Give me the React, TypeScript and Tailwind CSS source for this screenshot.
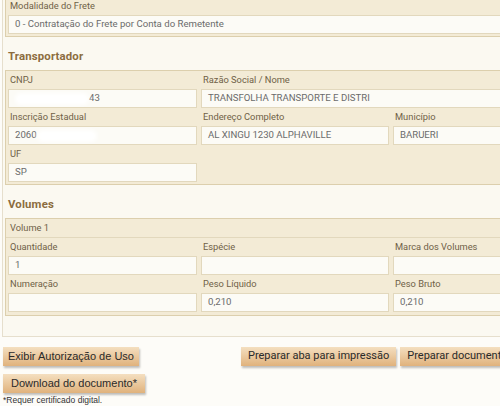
import type { ReactNode } from "react";

const font = { fontFamily: "Roboto, 'Liberation Sans', sans-serif" };
const arial = { fontFamily: "'Liberation Sans', Arial, sans-serif" };

function Label({ children }: { children: ReactNode }) {
  return (
    <div className="flex h-[18px] items-center pl-[2px] text-[9.3px] text-[#6f6147]">
      {children}
    </div>
  );
}

function Field({ children }: { children?: ReactNode }) {
  return (
    <div className="flex h-[19px] items-center overflow-hidden whitespace-nowrap border border-[#e2d8bd] bg-[#fcfbf6] pl-[6px] text-[9.6px] text-[#6b6b6b]">
      {children}
    </div>
  );
}

function Heading({ children }: { children: ReactNode }) {
  return (
    <div className="flex h-[33px] items-center pl-[3px] pt-[7px] text-[11.4px] font-bold tracking-[0.15px] text-[#8c6d3f]">
      {children}
    </div>
  );
}

// mancha que imita os dígitos borrados do print
function Blur({ w }: { w: number }) {
  return <span className="inline-block h-[12px] rounded-full bg-white blur-[2px]" style={{ width: w }} />;
}

function Botao({
  children,
  useArial = false,
  className = "px-[7px]",
}: {
  children: ReactNode;
  useArial?: boolean;
  className?: string;
}) {
  return (
    <button
      className={`h-[19px] whitespace-nowrap bg-gradient-to-b from-[#f4dfc0] to-[#e0b27c] text-[11px] text-[#2a2a2a] shadow-[1px_2px_2px_rgba(0,0,0,0.25)] ${className}`}
      style={useArial ? arial : font}
    >
      {children}
    </button>
  );
}

export default function App() {
  return (
    <div className="h-[406px] w-[500px] overflow-hidden bg-[#fdfcf8]" style={font}>
      <div className="w-[600px]">
        {/* bloco do formulário */}
        <div className="ml-[2px] border-b border-l border-[#e6dfcd] bg-[#fbf9f1] pb-[20px] pl-[2px]">
          {/* Modalidade do frete */}
          <div className="-mt-[4px] border border-[#dccfad] bg-[#f3ebd6] px-[2px] pb-[2px]">
            <Label>Modalidade do Frete</Label>
            <Field>0 - Contratação do Frete por Conta do Remetente</Field>
          </div>

          <Heading>Transportador</Heading>
          <div className="border border-[#dccfad] bg-[#f3ebd6] px-[2px] pb-[2px]">
            <div className="grid grid-cols-[189px_188px_188px] gap-x-[4px]">
              <div>
                <Label>CNPJ</Label>
                <Field>
                  <Blur w={74} />
                  <span>43</span>
                </Field>
              </div>
              <div className="col-span-2">
                <Label>Razão Social / Nome</Label>
                <Field>TRANSFOLHA TRANSPORTE E DISTRI</Field>
              </div>
              <div>
                <Label>Inscrição Estadual</Label>
                <Field>
                  <span>2060</span>
                  <Blur w={60} />
                </Field>
              </div>
              <div>
                <Label>Endereço Completo</Label>
                <Field>AL XINGU 1230 ALPHAVILLE</Field>
              </div>
              <div>
                <Label>Município</Label>
                <Field>BARUERI</Field>
              </div>
              <div>
                <Label>UF</Label>
                <Field>SP</Field>
              </div>
            </div>
          </div>

          <Heading>Volumes</Heading>
          <div className="border border-[#dccfad] bg-[#f3ebd6] px-[2px] pb-[3px]">
            <div className="-mx-[2px] border-b border-[#e2d8bd] px-[2px]">
              <Label>Volume 1</Label>
            </div>
            <div className="grid grid-cols-[189px_188px_188px] gap-x-[4px]">
              <div>
                <Label>Quantidade</Label>
                <Field>1</Field>
              </div>
              <div>
                <Label>Espécie</Label>
                <Field />
              </div>
              <div>
                <Label>Marca dos Volumes</Label>
                <Field />
              </div>
              <div>
                <Label>Numeração</Label>
                <Field />
              </div>
              <div>
                <Label>Peso Líquido</Label>
                <Field>0,210</Field>
              </div>
              <div>
                <Label>Peso Bruto</Label>
                <Field>0,210</Field>
              </div>
            </div>
          </div>
        </div>

        {/* ações */}
        <div className="mt-[10px] flex pl-[3px]">
          <Botao useArial className="px-[5px]">
            Exibir Autorização de Uso
          </Botao>
          <div className="ml-[102px] flex gap-[4px]">
            <Botao>Preparar aba para impressão</Botao>
            <Botao>Preparar documento para impressão</Botao>
          </div>
        </div>
        <div className="mt-[8px] flex pl-[3px]">
          <Botao useArial className="px-[8px]">
            Download do documento*
          </Botao>
        </div>
        <p className="mt-[2px] pl-[3px] text-[8.5px] leading-[10px] text-[#333]" style={arial}>
          *Requer certificado digital.
        </p>
      </div>
    </div>
  );
}
